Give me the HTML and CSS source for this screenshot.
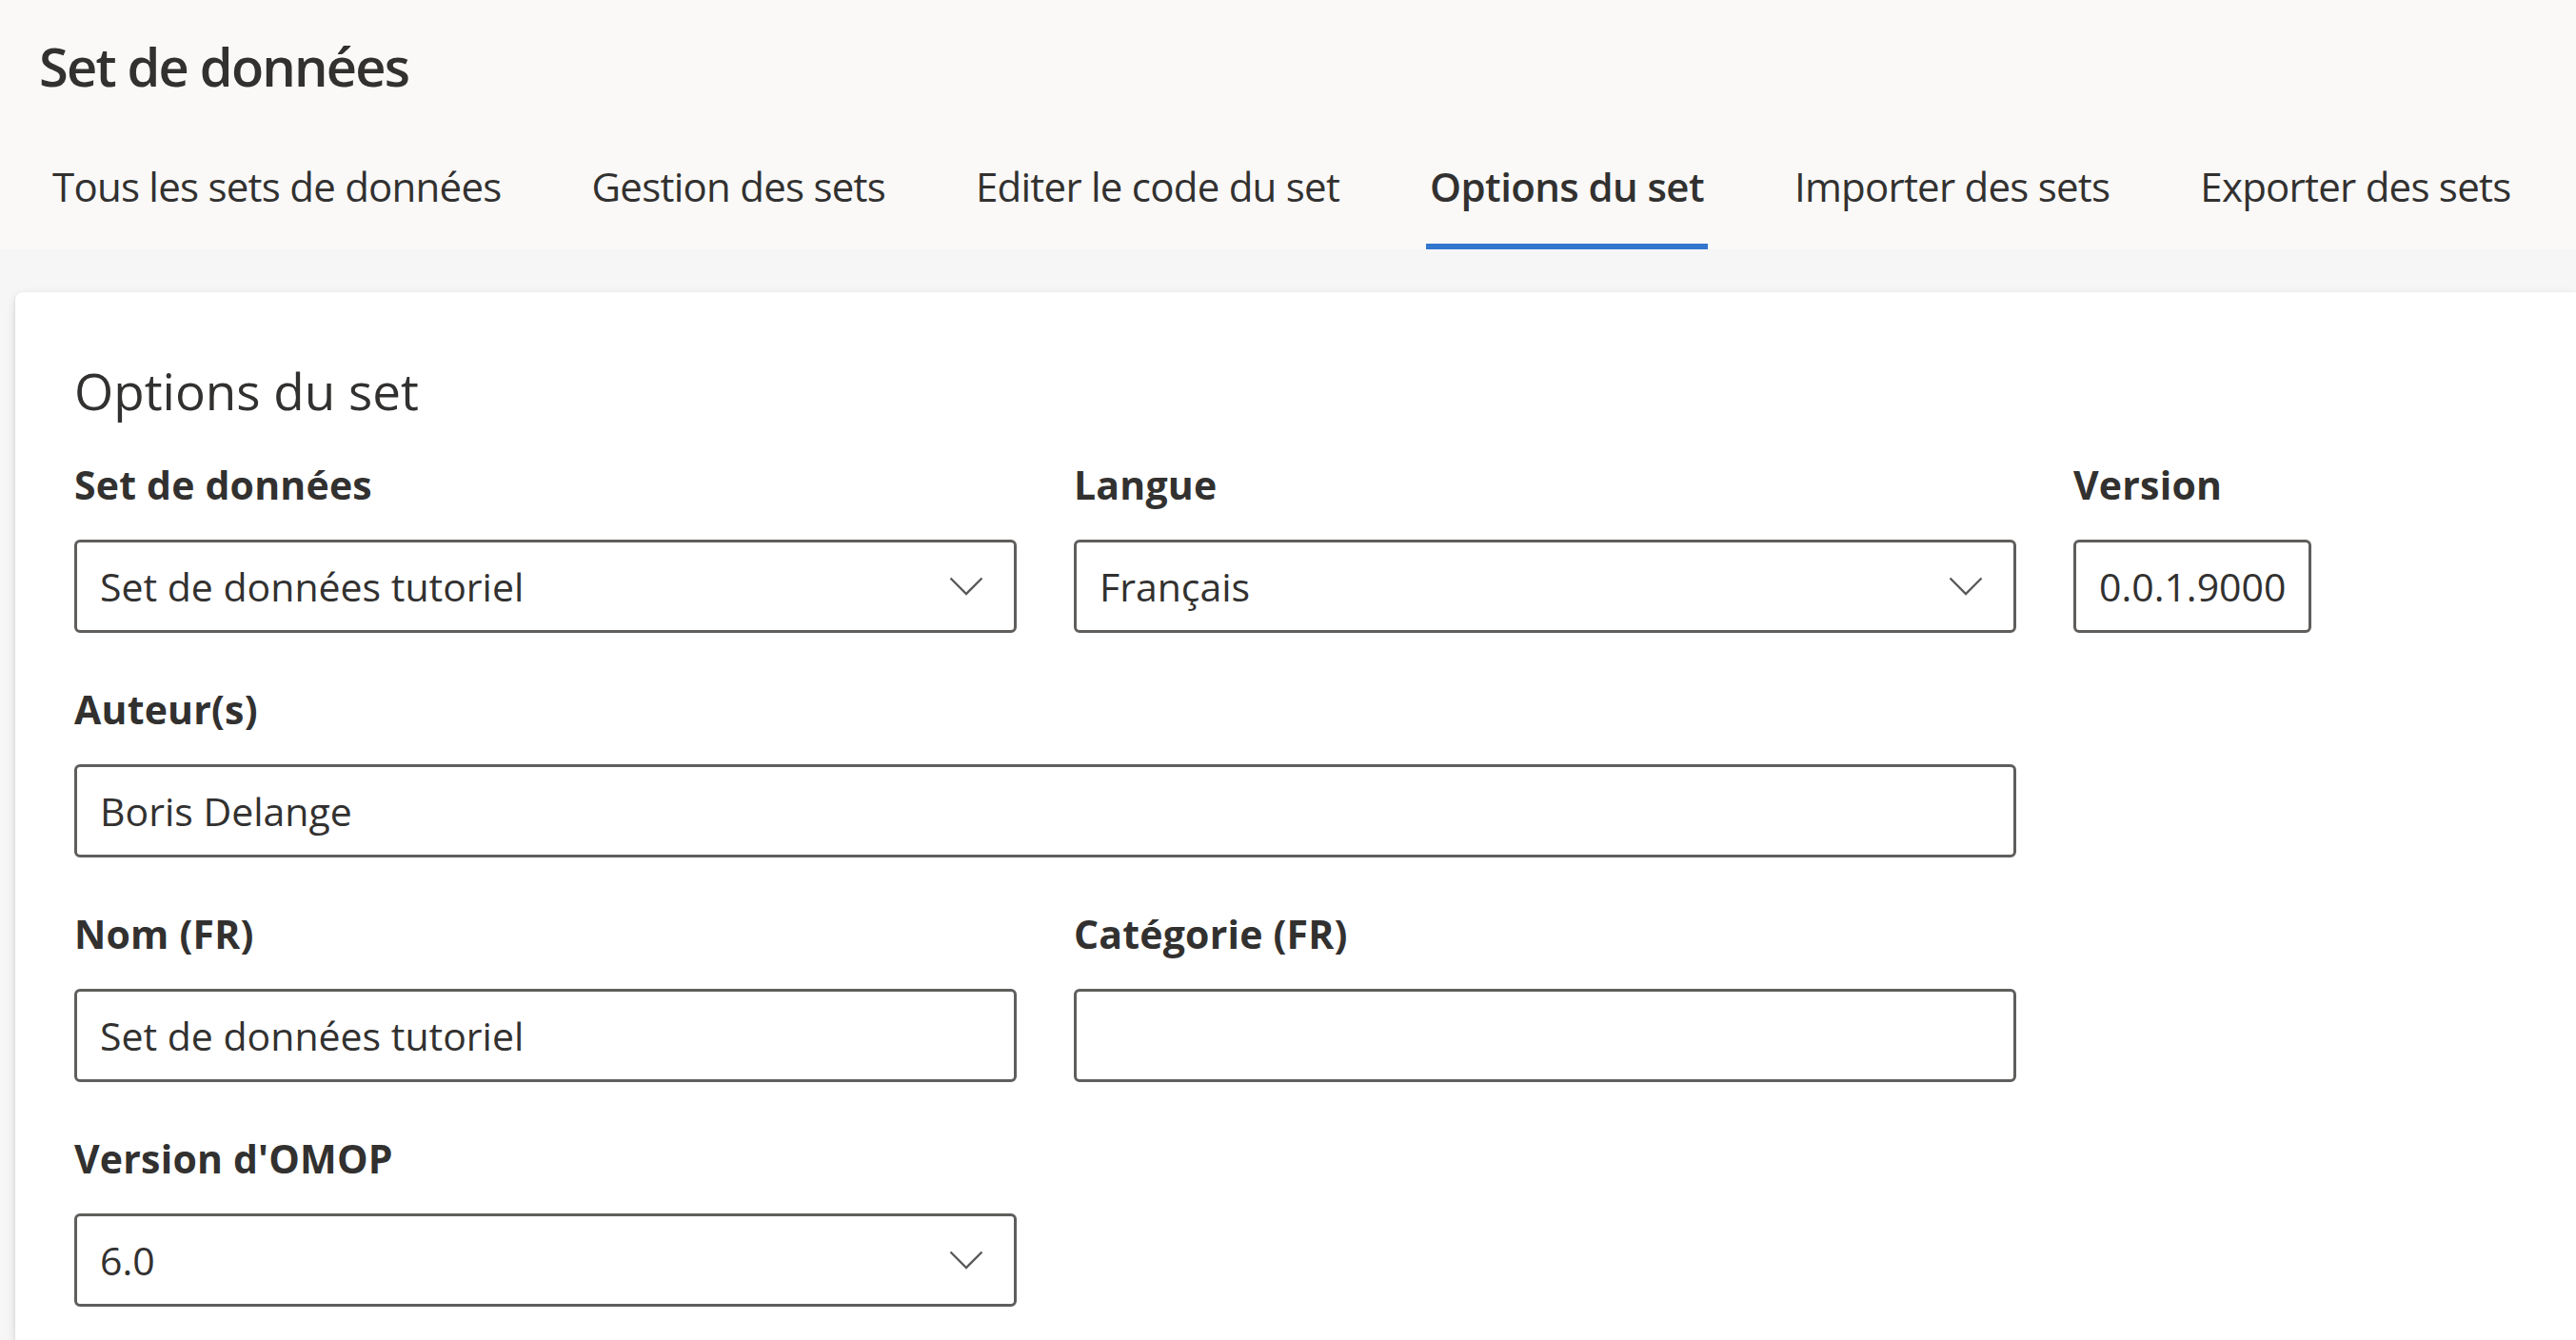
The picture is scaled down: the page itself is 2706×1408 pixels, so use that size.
FILE: index.html
```html
<!DOCTYPE html>
<html lang="fr">
<head>
<meta charset="utf-8">
<title>Set de données</title>
<link rel="stylesheet" href="styles.css">
</head>
<body>
<div class="page">
  <header class="top">
    <h1 class="title">Set de données</h1>
    <nav class="tabs">
      <a class="tab">Tous les sets de données</a>
      <a class="tab">Gestion des sets</a>
      <a class="tab">Editer le code du set</a>
      <a class="tab active">Options du set</a>
      <a class="tab">Importer des sets</a>
      <a class="tab">Exporter des sets</a>
    </nav>
  </header>
  <main class="content">
    <section class="card">
      <h2 class="card-title">Options du set</h2>
      <div class="form">
        <div class="row">
          <div class="field col-main">
            <label class="label">Set de données</label>
            <div class="box dropdown">
              <span class="value">Set de données tutoriel</span>
              <svg class="chevron" viewBox="0 0 36 20" width="36" height="20"><polyline points="1.5,1.5 18,18 34.5,1.5" fill="none" stroke="#5a5a5a" stroke-width="2.4"/></svg>
            </div>
          </div>
          <div class="field col-main">
            <label class="label">Langue</label>
            <div class="box dropdown">
              <span class="value">Français</span>
              <svg class="chevron" viewBox="0 0 36 20" width="36" height="20"><polyline points="1.5,1.5 18,18 34.5,1.5" fill="none" stroke="#5a5a5a" stroke-width="2.4"/></svg>
            </div>
          </div>
          <div class="field col-version">
            <label class="label">Version</label>
            <div class="box textfield"><span class="value">0.0.1.9000</span></div>
          </div>
        </div>
        <div class="row">
          <div class="field col-wide">
            <label class="label">Auteur(s)</label>
            <div class="box textfield"><span class="value">Boris Delange</span></div>
          </div>
        </div>
        <div class="row">
          <div class="field col-main">
            <label class="label">Nom (FR)</label>
            <div class="box textfield"><span class="value">Set de données tutoriel</span></div>
          </div>
          <div class="field col-main">
            <label class="label">Catégorie (FR)</label>
            <div class="box textfield"><span class="value"></span></div>
          </div>
        </div>
        <div class="row">
          <div class="field col-main">
            <label class="label">Version d'OMOP</label>
            <div class="box dropdown">
              <span class="value">6.0</span>
              <svg class="chevron" viewBox="0 0 36 20" width="36" height="20"><polyline points="1.5,1.5 18,18 34.5,1.5" fill="none" stroke="#5a5a5a" stroke-width="2.4"/></svg>
            </div>
          </div>
        </div>
      </div>
    </section>
  </main>
</div>
</body>
</html>
```
FILE: styles.css
```css
html, body {
  margin: 0;
  padding: 0;
}
body {
  background: #faf9f8;
  color: #323130;
  font-family: "Segoe UI", "Open Sans", "Noto Sans", sans-serif;
  overflow: hidden;
}
.page {
  display: flex;
  flex-direction: column;
  height: 1408px;
}
.top {
  background: #faf9f8;
  padding-top: 29px;
}
.title {
  margin: 0;
  padding-left: 41px;
  font-size: 56px;
  font-weight: 600;
  line-height: 80px;
  letter-spacing: -1.8px;
}
.tabs {
  display: flex;
  margin-top: 21px;
  padding-left: 8px;
  height: 132px;
}
.tab {
  position: relative;
  padding: 0 47.5px;
  font-size: 42px;
  line-height: 132px;
  letter-spacing: -0.75px;
  color: #323130;
  white-space: nowrap;
}
.tab:first-child {
  padding-left: 47px;
}
.tab.active {
  font-weight: 600;
  letter-spacing: -0.6px;
}
.tab.active::after {
  content: "";
  position: absolute;
  left: 43px;
  right: 43px;
  bottom: 0;
  height: 6px;
  background: #3276cd;
}
.content {
  flex: 1;
  background: #f6f6f6;
  padding-top: 45px;
  padding-left: 16px;
  display: flex;
}
.card {
  flex: 1;
  background: #ffffff;
  border-radius: 8px 0 0 0;
  box-shadow: 0 4px 11px rgba(0, 0, 0, 0.12), 0 1px 3px rgba(0, 0, 0, 0.1);
  padding: 68px 62px 0 62px;
}
.card-title {
  margin: 0 0 32px 0;
  font-size: 53px;
  font-weight: 400;
  line-height: 72px;
  letter-spacing: 0;
}
.form {
  display: flex;
  flex-direction: column;
  gap: 50px;
}
.row {
  display: flex;
  gap: 60px;
}
.field {
  display: flex;
  flex-direction: column;
}
.col-main {
  width: 990px;
}
.col-version {
  width: 250px;
}
.col-wide {
  width: 2040px;
}
.label {
  font-size: 41px;
  font-weight: 700;
  line-height: 60px;
  margin-bottom: 28px;
  letter-spacing: 0.2px;
}
.box {
  box-sizing: border-box;
  height: 98px;
  border: 3px solid #605e5c;
  border-radius: 6px;
  display: flex;
  align-items: center;
  padding: 0 32px 0 24px;
  background: #ffffff;
}
.dropdown {
  justify-content: space-between;
}
.value {
  font-size: 41px;
  letter-spacing: 0;
  white-space: nowrap;
}
.chevron {
  flex: none;
  display: block;
}
```
